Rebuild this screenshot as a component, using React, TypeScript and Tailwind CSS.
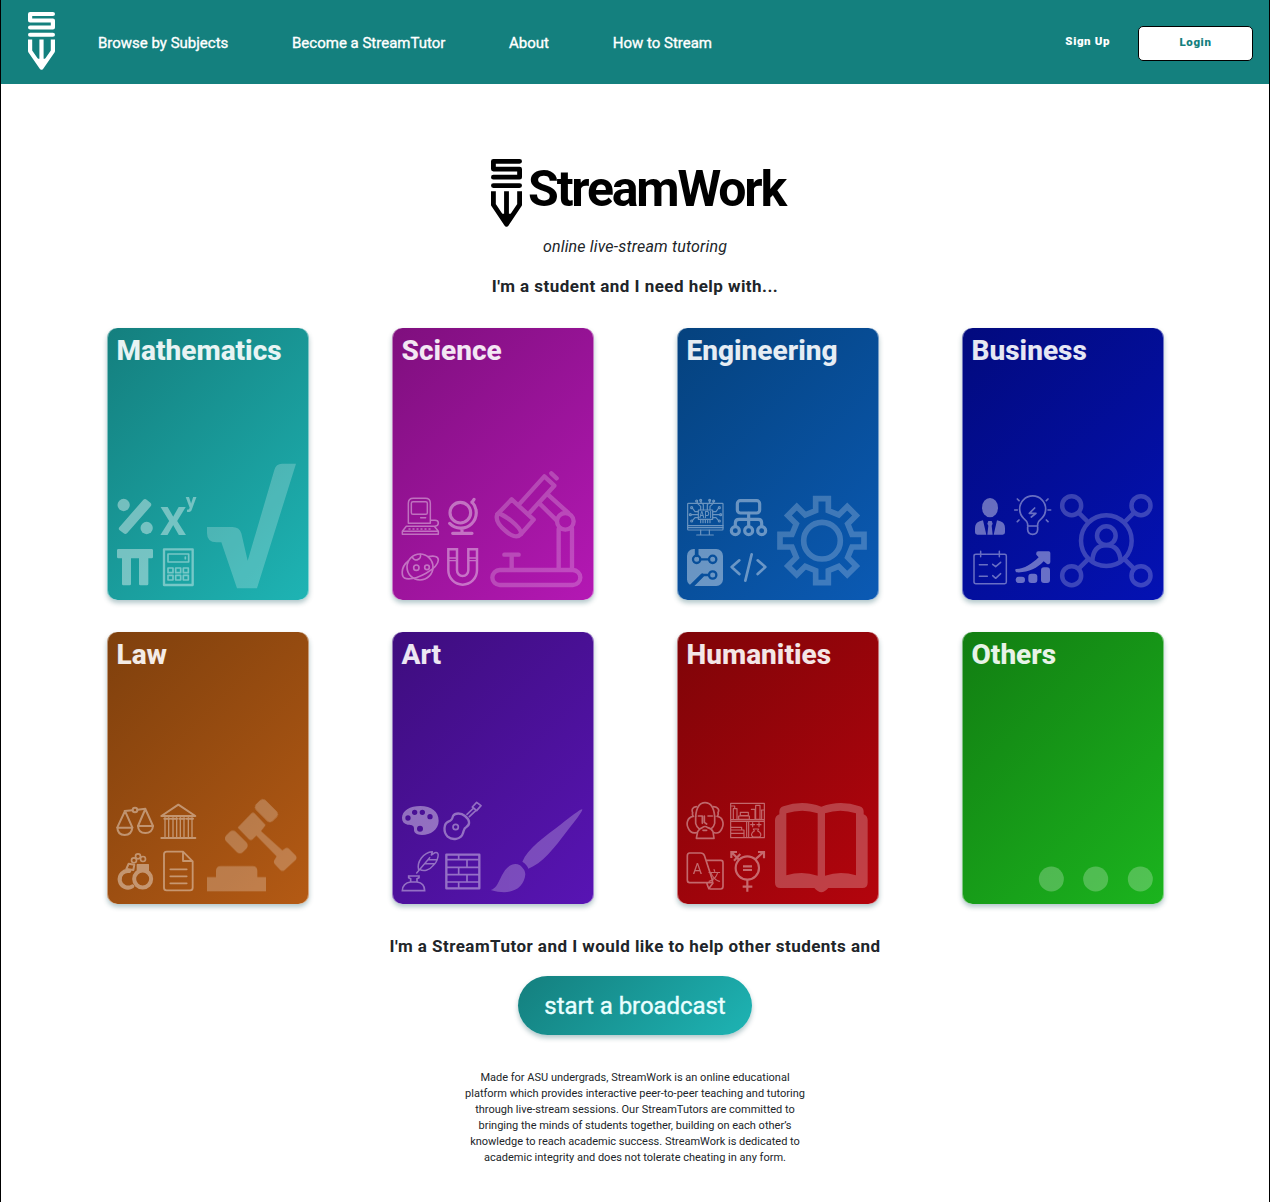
import type { ReactNode } from "react";

function Logo({ className }: { className: string }) {
  return (
    <svg
      viewBox="0 0 90 202"
      preserveAspectRatio="none"
      className={className}
      fill="none"
      stroke="currentColor"
      strokeWidth="14"
      strokeLinecap="round"
      strokeLinejoin="round"
    >
      <path d="M83 7H7V30H83V54H7" />
      <path d="M7 79H83" />
      <path d="M7 96V136L45 194L83 136V96M45 96V192" strokeLinecap="butt" />
      <path d="M27 163H63L45 194Z" fill="currentColor" stroke="none" />
    </svg>
  );
}

/* Small icons and the large icon share the same drawing area but differ in strength. */
function Art({ y, small, large }: { y: number; small?: ReactNode; large: ReactNode }) {
  return (
    <svg
      viewBox={y === 0 ? "21 0 606 450" : "21 -78 606 450"}
      className="block h-[150px] w-full"
      fill="none"
      stroke="white"
      strokeLinecap="round"
      strokeLinejoin="round"
    >
      <g opacity="0.4">{small}</g>
      <g opacity={y === 0 ? "0.22" : "0.24"}>{large}</g>
    </svg>
  );
}

const gearPath = (() => {
  const pts: string[] = [];
  for (let k = 0; k < 8; k++) {
    const a = (k * Math.PI) / 4;
    for (const [x, y] of [[-19, -90], [-19, -126], [19, -126], [19, -90]]) {
      pts.push(
        `${(456 + x * Math.cos(a) - y * Math.sin(a)).toFixed(1)} ${(272 + x * Math.sin(a) + y * Math.cos(a)).toFixed(1)}`
      );
    }
  }
  return "M" + pts.join("L") + "Z";
})();

const mathematics = (
  <Art
    y={0}
    small={
      <>
        <g fill="white" stroke="none">
          <circle cx="71" cy="165" r="18.5" />
          <circle cx="140" cy="234" r="18.5" />
          <path d="M58 232L130 149Q135 145 140 149L152 159Q156 164 152 169L81 250Q76 254 71 250L59 241Q54 237 58 232Z" />
          <path d="M55 297H155Q159 297 159 301V321Q159 325 155 325H145V402Q145 406 141 406H121Q117 406 117 402V325H93V402Q93 406 89 406H70Q66 406 66 402V325H55Q51 325 51 321V301Q51 297 55 297Z" />
          <text x="180" y="255" fontSize="115" fontWeight="700" fontFamily="Roboto, sans-serif" textLength="79" lengthAdjust="spacingAndGlyphs">X</text>
          <text x="257" y="174" fontSize="58" fontWeight="700" fontFamily="Roboto, sans-serif" textLength="32" lengthAdjust="spacingAndGlyphs">y</text>
        </g>
        <rect x="192" y="298" width="86" height="107" strokeWidth="7" />
        <rect x="204" y="312" width="62" height="24" strokeWidth="5" />
        <path d="M256 321V326" strokeWidth="5" />
        {[204, 227, 250].map((x) =>
          [354, 376].map((y) => <rect key={`${x}-${y}`} x={x} y={y} width="15" height="14" strokeWidth="5" />)
        )}
      </>
    }
    large={
      <path
        fill="white"
        stroke="none"
        d="M321 231H397Q418 231 424 250L443 332L523 60Q528 41 546 41H588L471 415H411L364 277H349Q321 277 321 250Z"
      />
    }
  />
);

const science = (
  <Art
    y={0}
    small={
      <>
        <g strokeWidth="4.5">
          <path d="M70 220V160Q70 145 85 145H121Q136 145 136 160V220Z" />
          <rect x="79" y="155" width="48" height="38" rx="5" />
          <path d="M107 203H122M137 211H150Q160 211 160 219T150 229H64L52 244V253H160V244L148 229M52 244H160" />
          <path d="M72 237H140" strokeDasharray="3 9" />
        </g>
        <g strokeWidth="9.5">
          <circle cx="226" cy="188" r="31" />
          <path d="M261 156A46 46 0 0 1 194 220M261 157L267 148M231 235V249M203 250H261" />
        </g>
        <g strokeWidth="5">
          <circle cx="105" cy="351" r="39" />
          <path d="M70 333C45 352 48 385 64 386C95 390 159 357 160 330C160 318 146 317 130 320" />
          <circle cx="94" cy="353" r="8" />
          <circle cx="126" cy="352" r="7" />
          <path d="M82 321A12 12 0 0 0 106 313" />
        </g>
        <g strokeWidth="7.5" strokeLinejoin="miter">
          <path d="M190 298V361A43 43 0 0 0 276 361V298H250V361A17 17 0 0 1 216 361V298Z" />
          <path d="M190 324H216M190 332H216M250 324H276M250 332H276" strokeWidth="4" />
        </g>
      </>
    }
    large={
      <g strokeWidth="13">
        <rect x="322" y="360" width="264" height="45" rx="22.5" />
        <path d="M358 314H401M380 314V359M521 236V358M561 236V358" />
        <circle cx="541" cy="214" r="25" />
        <path d="M488 133L549 188M464 161L515 211M405 160L478 79L508 107L436 186M499 70L515 85" />
        <path d="M380 148L446 209L408 252C396 266 378 257 362 243C342 227 330 211 337 193Z" />
        <path d="M337 193C350 185 412 234 408 252" />
      </g>
    }
  />
);

const engineering = (
  <Art
    y={0}
    small={
      <>
        <g strokeWidth="3.5">
          <rect x="53" y="160" width="106" height="80" rx="2" />
          <path d="M53 227H159M53 233H159M92 240V253M118 240V253M80 255H130" />
          <rect x="85" y="180" width="43" height="28" />
          <path d="M92 180V169L82 160V154M100 180V164L93 158V152M112 180V164L119 158V152M120 180V169L130 160V154M85 185H75L67 174M85 194H63M85 203H75L67 212M128 185H138L146 174M128 194H150M128 203H138L146 212M92 208V218M99 208V218M106 208V218M113 208V218M120 208V218" />
          {[[80, 153], [92, 151], [119, 151], [131, 153], [65, 173], [61, 194], [65, 213], [148, 173], [152, 194], [148, 213]].map(([x, y]) => (
            <circle key={`${x}-${y}`} cx={x} cy={y} r="3" />
          ))}
        </g>
        <text x="88" y="204" fontSize="27" fontWeight="500" fontFamily="Roboto, sans-serif" fill="white" stroke="none" textLength="37" lengthAdjust="spacingAndGlyphs">API</text>
        <g strokeWidth="9.5">
          <rect x="202" y="152" width="67" height="37" rx="9" />
          <path d="M236 190V226M196 228V219Q196 208 207 208H265Q275 208 275 219V228" />
          <circle cx="196" cy="242" r="12" />
          <circle cx="236" cy="242" r="12" />
          <circle cx="275" cy="242" r="12" />
          <path d="M208 331L185 351L208 372M263 331L286 351L263 372M245 313L226 392" strokeWidth="8" />
        </g>
        <mask id="circuit">
          <rect x="45" y="290" width="120" height="125" fill="white" stroke="none" />
          <g stroke="black" strokeWidth="7">
            <circle cx="80" cy="328" r="11" />
            <circle cx="128" cy="328" r="11" />
            <circle cx="128" cy="375" r="11" />
            <path d="M80 317V293M91 328H117M117 375H101L67 409" />
            <path d="M80 293V316" strokeWidth="11" />
            <path d="M62 409L97 375" strokeWidth="10" />
          </g>
        </mask>
        <rect x="51" y="297" width="108" height="111" rx="20" fill="white" stroke="none" mask="url(#circuit)" />
      </>
    }
    large={
      <g strokeWidth="17" strokeLinejoin="miter">
        <path d={gearPath} />
        <circle cx="456" cy="272" r="55" />
      </g>
    }
  />
);

const business = (
  <Art
    y={0}
    small={
      <>
        <g fill="white" stroke="none">
          <ellipse cx="105" cy="173" rx="24" ry="29" />
          <path d="M84 211L94 254H67Q60 254 60 247V235Q60 219 74 214ZM126 211L116 254H143Q150 254 150 247V235Q150 219 136 214ZM100 213H110L113 221L110 227L113 254H97L100 227L97 221Z" />
          <path d="M182 357C208 357 230 342 251 322L244 314Q242 304 250 304H281Q286 304 286 309V337Q284 345 276 342L266 334C246 356 218 369 184 367Q179 362 182 357Z" />
          <rect x="182" y="380" width="28" height="19" rx="9" />
          <rect x="220" y="371" width="27" height="28" rx="9" />
          <rect x="258" y="352" width="27" height="47" rx="9" />
        </g>
        <g strokeWidth="5">
          <path d="M218 228V222Q217 214 206 205A39 39 0 1 1 260 205Q249 214 248 222V228ZM218 231V239Q219 253 233 253T248 239V231" />
          <path d="M239 174L223 190H243L229 201M179 180H187M279 180H287M187 147L192 152M279 147L274 152M187 215L192 210M279 215L274 210" />
          <path d="M63 313H149Q154 313 154 318V396Q154 401 149 401H63Q57 401 57 396V318Q57 313 63 313ZM77 304V320M133 304V320M73 344H97M73 379H97M113 343L122 350L137 337M113 377L122 385L137 371" strokeWidth="4.5" />
        </g>
      </>
    }
    large={
      <g strokeWidth="13.5">
        <circle cx="454" cy="272" r="76" />
        <circle cx="454" cy="257" r="28" />
        <path d="M412 334Q414 286 454 286T497 334" strokeLinecap="butt" />
        {[[350, 167], [558, 167], [350, 377], [558, 377]].map(([x, y]) => (
          <circle key={`${x}-${y}`} cx={x} cy={y} r="28.5" />
        ))}
        <path d="M371 188L399 216M537 188L509 216M371 356L399 328M537 356L509 328" strokeLinecap="butt" />
      </g>
    }
  />
);

const law = (
  <Art
    y={1}
    small={
      <>
        <g strokeWidth="6">
          <path d="M52 142L75 93L97 142M114 138L136 87L159 138M74 93L97 91M113 89L136 86" />
          <path d="M52 143H97Q95 165 74 165T52 143ZM114 138H159Q157 159 136 159T114 138Z" />
          <circle cx="105" cy="90" r="7" />
        </g>
        <g strokeWidth="6">
          <path d="M184 108L235 74L286 108ZM184 174H286M193 116H210M215 116H231M238 116H254M260 116H279" />
          <path d="M195 113V170M206 113V170M219 113V170M230 113V170M241 113V170M252 113V170M265 113V170M276 113V170" strokeWidth="4" />
        </g>
        <path d="M97 319A25 25 0 1 1 88 273" strokeWidth="12" />
        <circle cx="128" cy="297" r="25.5" strokeWidth="12" />
        <path d="M79 267L86 251L103 254L100 270Z" strokeWidth="6" />
        <path d="M112 272V254H145V272Z" fill="white" strokeWidth="4" />
        <g strokeWidth="5">
          <circle cx="102" cy="241" r="7.5" />
          <circle cx="114" cy="229" r="7.5" />
          <circle cx="129" cy="237" r="7.5" />
        </g>
        <path d="M200 215H249L278 244V323Q278 331 270 331H200Q192 331 192 323V223Q192 215 200 215ZM249 216V243H277M211 268H260M211 289H260M211 310H260" strokeWidth="5.5" />
      </>
    }
    large={
      <g fill="white" stroke="none">
        <rect x="464" y="72" width="71" height="41" rx="13" transform="rotate(45 500 92)" />
        <rect x="374" y="165" width="71" height="41" rx="13" transform="rotate(45 409 185)" />
        <path d="M454 100Q459 95 464 100L497 135L483 153L547 211L557 204Q563 202 568 207L586 225Q592 231 588 239L553 271Q547 275 541 270L525 253Q519 247 523 240L530 229L469 167L457 179Q452 182 447 178L413 143Z" />
        <path d="M321 291H348V272Q348 258 362 258H458Q472 258 472 272V291H498V334H321Z" />
      </g>
    }
  />
);

const art = (
  <Art
    y={1}
    small={
      <>
        <path
          fill="white"
          stroke="none"
          fillRule="evenodd"
          d="M51 114C51 92 75 78 106 78C139 78 161 95 161 122C161 149 136 165 111 165C94 165 86 158 87 148C88 137 82 134 68 134C57 132 51 125 51 114ZM61 114a8 8 0 1 0 16 0a8 8 0 1 0-16 0M81 97a8 8 0 1 0 16 0a8 8 0 1 0-16 0M104 97a8 8 0 1 0 16 0a8 8 0 1 0-16 0M127 110a8 8 0 1 0 16 0a8 8 0 1 0-16 0M96 146a9 9 0 1 0 18 0a9 9 0 1 0-18 0"
        />
        <path d="M190 125C201 121 202 116 204 108C210 98 228 98 240 108C255 120 256 134 244 141C236 145 237 151 234 159C228 180 201 181 188 170C174 156 176 131 190 125Z" strokeWidth="7" />
        <circle cx="212" cy="141" r="8" strokeWidth="5" />
        <path d="M246 103L266 84M253 110L273 91M262 81L275 67L288 77L275 92Z" strokeWidth="5" />
        <g strokeWidth="5">
          <path d="M71 288H102V293L96 296V306Q119 309 119 332H52Q53 309 77 306V296L71 293ZM78 306H96" strokeLinejoin="miter" />
          <path d="M95 279L134 233M101 271C94 245 116 217 142 215L139 225L150 218Q162 216 159 230C157 240 153 250 144 257C133 272 115 275 104 268M120 251H148M131 239H155" strokeWidth="4.5" />
        </g>
        <g strokeWidth="5" strokeLinecap="butt">
          <rect x="184" y="224" width="99" height="101" strokeWidth="7" />
          <path d="M184 239H283M184 262H283M184 284H283M184 306H283M221 225V239M246 239V262M221 262V284M246 284V306M221 306V325" />
        </g>
      </>
    }
    large={
      <g fill="white" stroke="none">
        <path d="M592 88C593 94 568 126 548 151C508 205 470 252 430 266Q426 254 412 245C428 205 480 170 529 132C556 112 584 88 592 88Z" />
        <path d="M421 283C417 324 382 349 317 330C345 322 344 278 374 257Q390 247 405 256Q420 268 421 283Z" />
      </g>
    }
  />
);

const humanities = (
  <Art
    y={1}
    small={
      <>
        <g strokeWidth="5">
          <path d="M77 109C80 77 91 68 105 68S131 77 134 109M79 80C68 81 64 89 68 98Q66 105 70 109M131 80C144 81 149 89 144 98Q146 105 141 109M69 109C51 112 48 133 55 145C60 156 68 161 79 158M142 109C160 112 162 133 156 145C151 156 142 161 133 158" />
          <path d="M77 109V130Q80 142 88 147M134 109V130Q131 142 123 147M85 108H97V130M114 108H127M103 108V127L110 132M79 175L83 155Q88 145 97 143Q105 136 113 143Q124 145 129 155L132 175ZM99 151H110" />
        </g>
        <g strokeWidth="3.5">
          <path d="M182 70H283V173H182ZM182 119H283M182 124H283M230 124V172M236 124V172M190 118V86H201V118M185 78H194V86M206 108H238V118H206ZM211 97H235V107H211ZM244 88H255V118M257 76H270V118H257ZM274 90H281M275 90V118M184 142H215V150H184M184 150H222V160H184M184 160H222V171M250 147H266L263 153C276 158 274 171 266 171H250C242 168 243 158 253 153Z" />
          <path d="M248 128V140M242 134H254M267 128V140M261 134H273" />
        </g>
        <g strokeWidth="5">
          <path d="M59 219H92Q100 219 103 226L127 299Q130 308 120 308H59Q52 308 52 300V227Q52 219 59 219ZM108 241H153Q159 241 159 248V319Q159 327 152 327H121Q116 327 114 320L110 308M116 326L129 309" />
        </g>
        <text x="68" y="281" fontSize="46" fontFamily="Roboto, sans-serif" fill="white" stroke="none" textLength="28" lengthAdjust="spacingAndGlyphs">A</text>
        <text x="114" y="300" fontSize="38" fontFamily="Noto Sans CJK SC, sans-serif" fill="white" stroke="none">文</text>
        <g strokeWidth="6.5" strokeLinecap="butt" strokeLinejoin="miter">
          <circle cx="232" cy="264" r="35" />
          <path d="M219 259H246M219 270H246M232 299V335M218 320H247M256 238L282 215M264 216H282V235M207 239L184 216M184 234V216H201M192 242L211 222" />
        </g>
      </>
    }
    large={
      <path
        fill="white"
        stroke="none"
        fillRule="evenodd"
        d="M328 95Q328 83 340 79Q398 58 454 80Q511 58 569 79Q581 83 581 95V103Q593 108 593 121V308Q593 324 577 324H475Q454 349 433 324H331Q315 324 315 308V121Q315 108 328 103ZM349 100Q397 84 443 100V287Q397 271 349 286ZM465 100Q511 84 558 100V286Q511 271 465 287Z"
      />
    }
  />
);

const others = (
  <Art
    y={1}
    large={
      <g fill="white" stroke="none">
        <circle cx="289" cy="297" r="37.5" />
        <circle cx="422" cy="297" r="37.5" />
        <circle cx="556" cy="297" r="37.5" />
      </g>
    }
  />
);

const subjects = [
  { name: "Mathematics", tone: "from-[#147f7e] to-[#1eb4b4]", art: mathematics },
  { name: "Science", tone: "from-[#7f0f7e] to-[#b418b4]", art: science },
  { name: "Engineering", tone: "from-[#05427e] to-[#0b5ab4]", art: engineering },
  { name: "Business", tone: "from-[#020a7e] to-[#0412b4]", art: business },
  { name: "Law", tone: "from-[#7f400d] to-[#b45a14]", art: law },
  { name: "Art", tone: "from-[#3e0d7e] to-[#5814b4]", art: art },
  { name: "Humanities", tone: "from-[#7f0408] to-[#b4040d]", art: humanities },
  { name: "Others", tone: "from-[#127e12] to-[#1bb41e]", art: others },
];

export default function App() {
  return (
    <div className="min-h-[1202px] border-x border-black bg-white font-[Roboto,sans-serif] text-[#212529]">
      <header className="flex h-[84px] items-center bg-[#14807e] pr-4 pl-[27px] text-white">
        <Logo className="-mt-0.5 h-[58px] w-[27px]" />
        <nav className="mt-0.5 ml-[43px] flex gap-[63.7px] text-[15px] leading-6 [-webkit-text-stroke:0.35px_currentColor]">
          <a>Browse by Subjects</a>
          <a>Become a StreamTutor</a>
          <a>About</a>
          <a>How to Stream</a>
        </nav>
        <div className="ml-auto flex items-center gap-7 text-[11.5px] font-black tracking-[0.6px]">
          <a className="-mt-px">Sign Up</a>
          <button className="mt-[3px] h-[35px] w-[115px] rounded-[5px] border border-black bg-white pb-px tracking-[0.6px] text-[#14807e]">
            Login
          </button>
        </div>
      </header>

      <main className="flex flex-col items-center">
        <div className="mt-[75px] flex h-[68px] items-start gap-[6px] pl-1.5 text-black">
          <Logo className="h-[68px] w-[31px]" />
          <h1 className="text-[50px] leading-[60px] font-bold tracking-[-2.2px]">StreamWork</h1>
        </div>
        <p className="mt-2 text-base leading-6 tracking-[0.18px] italic">online live-stream tutoring</p>
        <h2 className="mt-[15px] text-[17px] leading-6 font-bold tracking-[0.46px]">I'm a student and I need help with...</h2>

        <section className="mt-[30px] grid w-[1141px] grid-cols-[repeat(4,285px)] justify-items-center gap-y-8 pl-px">
          {subjects.map((s) => (
            <a
              key={s.name}
              className={`flex h-[272px] w-[202px] flex-col justify-between overflow-hidden rounded-[10px] bg-linear-135 shadow-[inset_1px_0_rgba(255,255,255,0.45),inset_-1px_0_rgba(255,255,255,0.45),0_3px_5px_rgba(0,70,80,0.3)] ${s.tone}`}
            >
              <h3 className="pt-1.5 pl-[9.5px] text-[28px] leading-[34px] font-extrabold text-white/90">{s.name}</h3>
              {s.art}
            </a>
          ))}
        </section>

        <h2 className="mt-[30px] text-[17px] leading-6 font-bold tracking-[0.46px]">
          I'm a StreamTutor and I would like to help other students and
        </h2>
        <button className="mt-[18px] h-[59px] w-[234px] rounded-full bg-linear-135 from-[#147f7e] to-[#1eb4b4] text-2xl tracking-[-0.06px] text-[#e8ffff] shadow-[0_3px_5px_rgba(0,70,80,0.3)] [-webkit-text-stroke:0.35px_currentColor]">
          start a broadcast
        </button>
        <p className="mt-[35px] w-[350px] text-center text-[11px] leading-4">
          Made for ASU undergrads, StreamWork is an online educational platform which provides interactive peer-to-peer
          teaching and tutoring through live-stream sessions. Our StreamTutors are committed to bringing the minds of
          students together, building on each other’s knowledge to reach academic success. StreamWork is dedicated to
          academic integrity and does not tolerate cheating in any form.
        </p>
      </main>
    </div>
  );
}
